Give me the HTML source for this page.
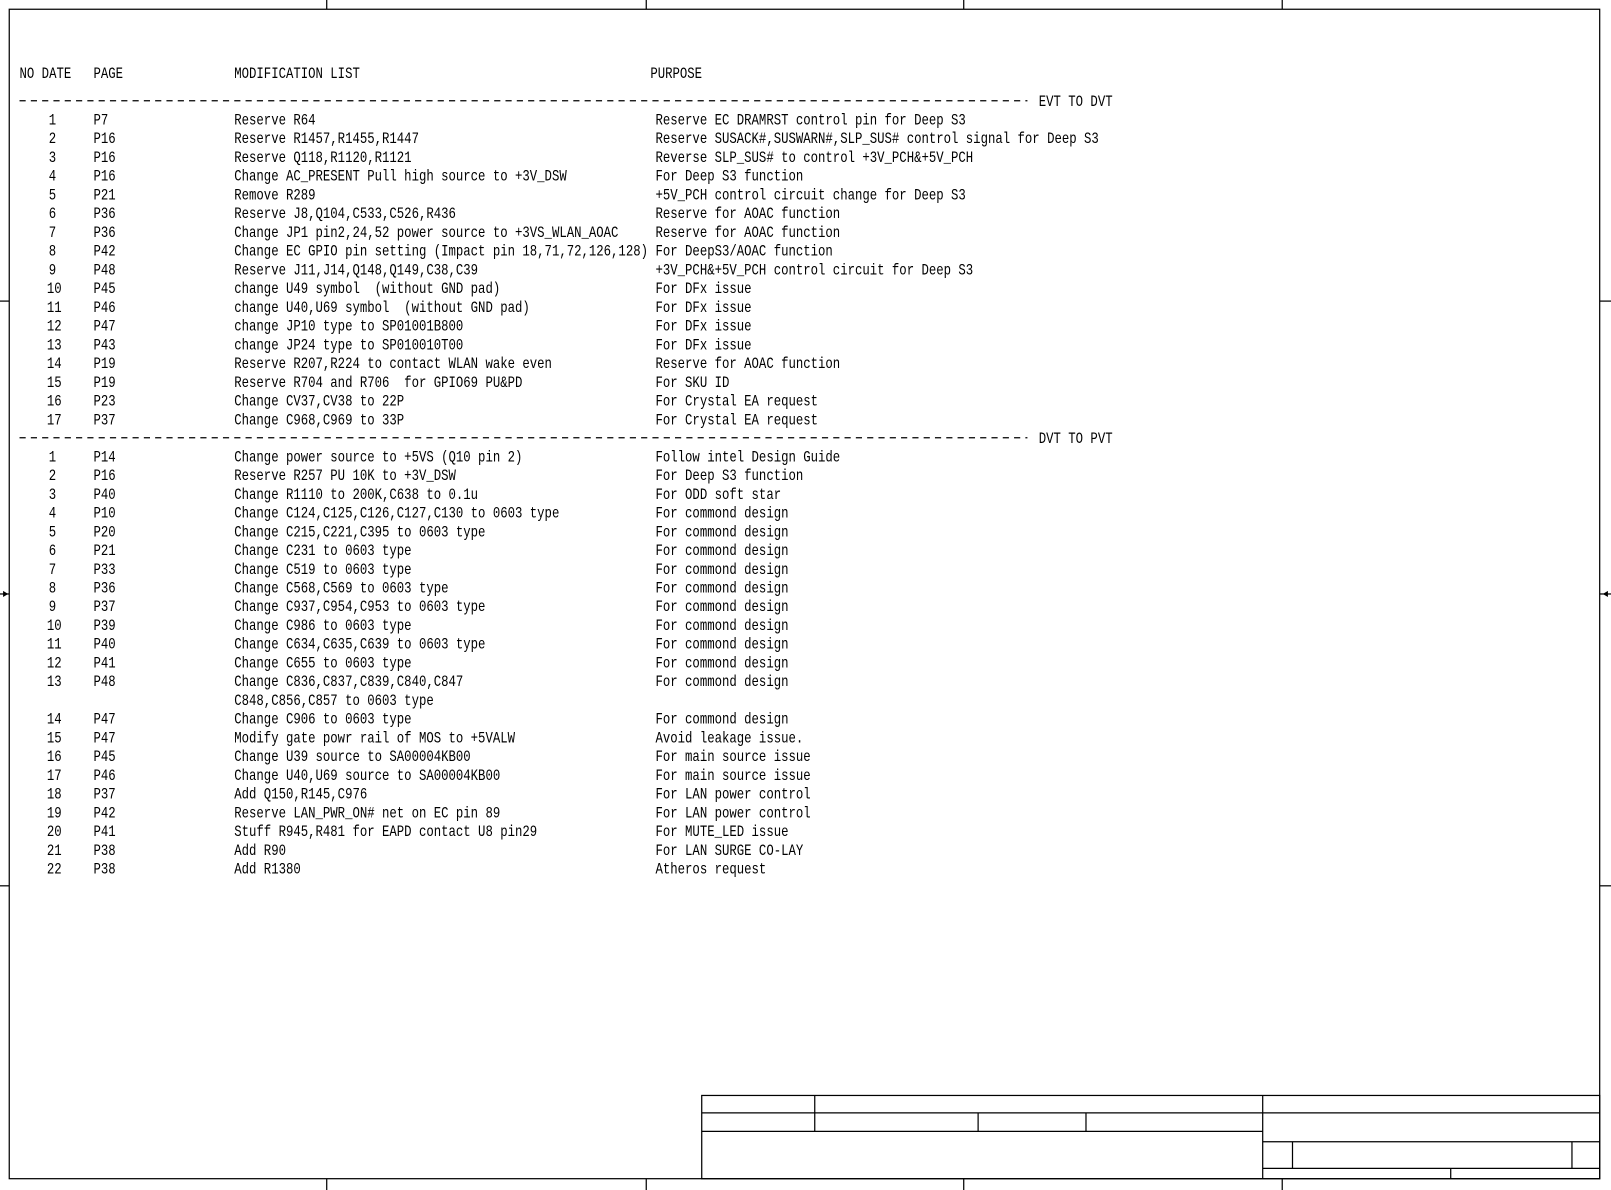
<!DOCTYPE html>
<html><head><meta charset="utf-8"><style>
html,body{margin:0;padding:0;background:#fff;}
svg{display:block;}
text{font-family:"Liberation Mono","Noto Sans CJK SC",monospace;font-size:15px;fill:#000;white-space:pre;}
</style></head><body>
<svg width="1611" height="1190" viewBox="0 0 1568 1158" preserveAspectRatio="none" xmlns="http://www.w3.org/2000/svg">
<g stroke="#000" stroke-width="1.2" fill="none">
<rect x="9" y="9" width="1548" height="1138"/>
<line x1="318" y1="0" x2="318" y2="9"/><line x1="629" y1="0" x2="629" y2="9"/><line x1="938" y1="0" x2="938" y2="9"/><line x1="1248" y1="0" x2="1248" y2="9"/>
<line x1="318" y1="1147" x2="318" y2="1158"/><line x1="629" y1="1147" x2="629" y2="1158"/><line x1="938" y1="1147" x2="938" y2="1158"/><line x1="1248" y1="1147" x2="1248" y2="1158"/>
<line x1="0" y1="293" x2="9" y2="293"/><line x1="0" y1="862" x2="9" y2="862"/><line x1="0" y1="578" x2="9" y2="578"/>
<line x1="1557" y1="293" x2="1568" y2="293"/><line x1="1557" y1="862" x2="1568" y2="862"/><line x1="1557" y1="578" x2="1568" y2="578"/>
<line x1="19" y1="98" x2="1000" y2="98" stroke-dasharray="6,5"/>
<line x1="19" y1="426" x2="1000" y2="426" stroke-dasharray="6,5"/>
<rect x="683" y="1066" width="874" height="81"/>
<line x1="683" y1="1083" x2="1557" y2="1083"/>
<line x1="683" y1="1101" x2="1229" y2="1101"/>
<line x1="793" y1="1066" x2="793" y2="1101"/>
<line x1="952" y1="1083" x2="952" y2="1101"/>
<line x1="1057" y1="1083" x2="1057" y2="1101"/>
<line x1="1229" y1="1066" x2="1229" y2="1147"/>
<line x1="1229" y1="1111" x2="1557" y2="1111"/>
<line x1="1229" y1="1137" x2="1557" y2="1137"/>
<line x1="1258" y1="1111" x2="1258" y2="1137"/>
<line x1="1530" y1="1111" x2="1530" y2="1137"/>
<line x1="1412" y1="1137" x2="1412" y2="1147"/>
</g>
<path d="M3 575 L8 578 L3 581Z M1565 575 L1560 578 L1565 581Z" fill="#000"/>
<g transform="scale(0.8,1)">
<text x="23.75" y="76">NO DATE</text><text x="113.75" y="76">PAGE</text><text x="285" y="76">MODIFICATION LIST</text><text x="791.25" y="76">PURPOSE</text>
<text x="1263.75" y="103">EVT TO DVT</text>
<text x="1263.75" y="431">DVT TO PVT</text>
<g text-anchor="middle">
<text x="63.75" y="121">1</text><text x="63.75" y="139.25">2</text><text x="63.75" y="157.5">3</text><text x="63.75" y="175.75">4</text><text x="63.75" y="194">5</text><text x="63.75" y="212.25">6</text><text x="63.75" y="230.5">7</text><text x="63.75" y="248.75">8</text><text x="63.75" y="267">9</text><text x="66" y="285.25">10</text><text x="66" y="303.5">11</text><text x="66" y="321.75">12</text><text x="66" y="340">13</text><text x="66" y="358.25">14</text><text x="66" y="376.5">15</text><text x="66" y="394.75">16</text><text x="66" y="413">17</text>
<text x="63.75" y="449">1</text><text x="63.75" y="467.2">2</text><text x="63.75" y="485.5">3</text><text x="63.75" y="503.7">4</text><text x="63.75" y="521.9">5</text><text x="63.75" y="540.2">6</text><text x="63.75" y="558.4">7</text><text x="63.75" y="576.6">8</text><text x="63.75" y="594.8">9</text><text x="66" y="613.1">10</text><text x="66" y="631.3">11</text><text x="66" y="649.5">12</text><text x="66" y="667.8">13</text><text x="66" y="704.2">14</text><text x="66" y="722.4">15</text><text x="66" y="740.7">16</text><text x="66" y="758.9">17</text><text x="66" y="777.1">18</text><text x="66" y="795.4">19</text><text x="66" y="813.6">20</text><text x="66" y="831.8">21</text><text x="66" y="850">22</text>
</g>
<g>
<text x="113.75" y="121">P7</text><text x="113.75" y="139.25">P16</text><text x="113.75" y="157.5">P16</text><text x="113.75" y="175.75">P16</text><text x="113.75" y="194">P21</text><text x="113.75" y="212.25">P36</text><text x="113.75" y="230.5">P36</text><text x="113.75" y="248.75">P42</text><text x="113.75" y="267">P48</text><text x="113.75" y="285.25">P45</text><text x="113.75" y="303.5">P46</text><text x="113.75" y="321.75">P47</text><text x="113.75" y="340">P43</text><text x="113.75" y="358.25">P19</text><text x="113.75" y="376.5">P19</text><text x="113.75" y="394.75">P23</text><text x="113.75" y="413">P37</text>
<text x="113.75" y="449">P14</text><text x="113.75" y="467.2">P16</text><text x="113.75" y="485.5">P40</text><text x="113.75" y="503.7">P10</text><text x="113.75" y="521.9">P20</text><text x="113.75" y="540.2">P21</text><text x="113.75" y="558.4">P33</text><text x="113.75" y="576.6">P36</text><text x="113.75" y="594.8">P37</text><text x="113.75" y="613.1">P39</text><text x="113.75" y="631.3">P40</text><text x="113.75" y="649.5">P41</text><text x="113.75" y="667.8">P48</text><text x="113.75" y="704.2">P47</text><text x="113.75" y="722.4">P47</text><text x="113.75" y="740.7">P45</text><text x="113.75" y="758.9">P46</text><text x="113.75" y="777.1">P37</text><text x="113.75" y="795.4">P42</text><text x="113.75" y="813.6">P41</text><text x="113.75" y="831.8">P38</text><text x="113.75" y="850">P38</text>
</g>
<g>
<text x="285" y="121">Reserve R64</text>
<text x="285" y="139.25">Reserve R1457,R1455,R1447</text>
<text x="285" y="157.5">Reserve Q118,R1120,R1121</text>
<text x="285" y="175.75">Change AC_PRESENT Pull high source to +3V_DSW</text>
<text x="285" y="194">Remove R289</text>
<text x="285" y="212.25">Reserve J8,Q104,C533,C526,R436</text>
<text x="285" y="230.5">Change JP1 pin2,24,52 power source to +3VS_WLAN_AOAC</text>
<text x="285" y="248.75">Change EC GPIO pin setting (Impact pin 18,71,72,126,128)</text>
<text x="285" y="267">Reserve J11,J14,Q148,Q149,C38,C39</text>
<text x="285" y="285.25">change U49 symbol  (without GND pad)</text>
<text x="285" y="303.5">change U40,U69 symbol  (without GND pad)</text>
<text x="285" y="321.75">change JP10 type to SP01001B800</text>
<text x="285" y="340">change JP24 type to SP010010T00</text>
<text x="285" y="358.25">Reserve R207,R224 to contact WLAN wake even</text>
<text x="285" y="376.5">Reserve R704 and R706  for GPIO69 PU&amp;PD</text>
<text x="285" y="394.75">Change CV37,CV38 to 22P</text>
<text x="285" y="413">Change C968,C969 to 33P</text>
<text x="285" y="449">Change power source to +5VS (Q10 pin 2)</text>
<text x="285" y="467.2">Reserve R257 PU 10K to +3V_DSW</text>
<text x="285" y="485.5">Change R1110 to 200K,C638 to 0.1u</text>
<text x="285" y="503.7">Change C124,C125,C126,C127,C130 to 0603 type</text>
<text x="285" y="521.9">Change C215,C221,C395 to 0603 type</text>
<text x="285" y="540.2">Change C231 to 0603 type</text>
<text x="285" y="558.4">Change C519 to 0603 type</text>
<text x="285" y="576.6">Change C568,C569 to 0603 type</text>
<text x="285" y="594.8">Change C937,C954,C953 to 0603 type</text>
<text x="285" y="613.1">Change C986 to 0603 type</text>
<text x="285" y="631.3">Change C634,C635,C639 to 0603 type</text>
<text x="285" y="649.5">Change C655 to 0603 type</text>
<text x="285" y="667.8">Change C836,C837,C839,C840,C847</text>
<text x="285" y="686">C848,C856,C857 to 0603 type</text>
<text x="285" y="704.2">Change C906 to 0603 type</text>
<text x="285" y="722.4">Modify gate powr rail of MOS to +5VALW</text>
<text x="285" y="740.7">Change U39 source to SA00004KB00</text>
<text x="285" y="758.9">Change U40,U69 source to SA00004KB00</text>
<text x="285" y="777.1">Add Q150,R145,C976</text>
<text x="285" y="795.4">Reserve LAN_PWR_ON# net on EC pin 89</text>
<text x="285" y="813.6">Stuff R945,R481 for EAPD contact U8 pin29</text>
<text x="285" y="831.8">Add R90</text>
<text x="285" y="850">Add R1380</text>
</g>
<g>
<text x="797.5" y="121">Reserve EC DRAMRST control pin for Deep S3</text>
<text x="797.5" y="139.25">Reserve SUSACK#,SUSWARN#,SLP_SUS# control signal for Deep S3</text>
<text x="797.5" y="157.5">Reverse SLP_SUS# to control +3V_PCH&amp;+5V_PCH</text>
<text x="797.5" y="175.75">For Deep S3 function</text>
<text x="797.5" y="194">+5V_PCH control circuit change for Deep S3</text>
<text x="797.5" y="212.25">Reserve for AOAC function</text>
<text x="797.5" y="230.5">Reserve for AOAC function</text>
<text x="797.5" y="248.75">For DeepS3/AOAC function</text>
<text x="797.5" y="267">+3V_PCH&amp;+5V_PCH control circuit for Deep S3</text>
<text x="797.5" y="285.25">For DFx issue</text>
<text x="797.5" y="303.5">For DFx issue</text>
<text x="797.5" y="321.75">For DFx issue</text>
<text x="797.5" y="340">For DFx issue</text>
<text x="797.5" y="358.25">Reserve for AOAC function</text>
<text x="797.5" y="376.5">For SKU ID</text>
<text x="797.5" y="394.75">For Crystal EA request</text>
<text x="797.5" y="413">For Crystal EA request</text>
<text x="797.5" y="449">Follow intel Design Guide</text>
<text x="797.5" y="467.2">For Deep S3 function</text>
<text x="797.5" y="485.5">For ODD soft star</text>
<text x="797.5" y="503.7">For commond design</text>
<text x="797.5" y="521.9">For commond design</text>
<text x="797.5" y="540.2">For commond design</text>
<text x="797.5" y="558.4">For commond design</text>
<text x="797.5" y="576.6">For commond design</text>
<text x="797.5" y="594.8">For commond design</text>
<text x="797.5" y="613.1">For commond design</text>
<text x="797.5" y="631.3">For commond design</text>
<text x="797.5" y="649.5">For commond design</text>
<text x="797.5" y="667.8">For commond design</text>
<text x="797.5" y="704.2">For commond design</text>
<text x="797.5" y="722.4">Avoid leakage issue.</text>
<text x="797.5" y="740.7">For main source issue</text>
<text x="797.5" y="758.9">For main source issue</text>
<text x="797.5" y="777.1">For LAN power control</text>
<text x="797.5" y="795.4">For LAN power control</text>
<text x="797.5" y="813.6">For MUTE_LED issue</text>
<text x="797.5" y="831.8">For LAN SURGE CO-LAY</text>
<text x="797.5" y="850">Atheros request</text>
</g>
</g>
</svg>
</body></html>
